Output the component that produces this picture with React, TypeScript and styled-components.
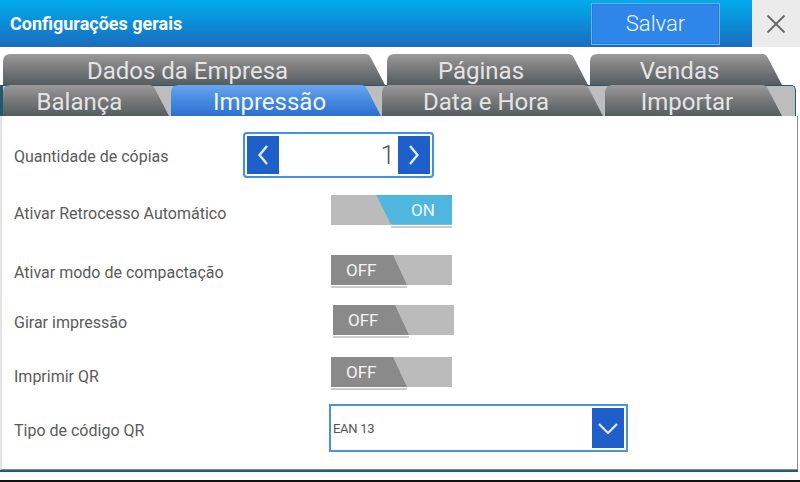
import React from 'react';
import styled, { createGlobalStyle } from 'styled-components';

const Global = createGlobalStyle`
  html, body { margin: 0; padding: 0; background: #fff; }
  body { font-family: Roboto, "Noto Sans", sans-serif; }
  * { box-sizing: border-box; }
`;

const Screen = styled.div`
  width: 800px;
  height: 482px;
  display: flex;
  flex-direction: column;
  background: #fff;
  overflow: hidden;
`;

const Header = styled.header`
  display: flex;
  height: 47px;
  flex-shrink: 0;
`;

const HeaderBar = styled.div`
  flex: 1;
  display: flex;
  align-items: center;
  padding-left: 10px;
  padding-right: 32px;
  background: linear-gradient(to bottom, #02acec 0%, #0a90da 45%, #1b6bbd 100%);
`;

const Title = styled.h1`
  margin: 0;
  font: 700 18px Roboto, sans-serif;
  color: #fff;
`;

const SaveButton = styled.button`
  margin-left: auto;
  width: 129px;
  height: 42px;
  background: #2f86ea;
  border: 1px solid #6cb4f6;
  box-shadow: inset 0 0 0 1px #2a7ad8;
  color: #f0f5fb;
  font: 300 22px Roboto, sans-serif;
  padding: 0;
`;

const CloseArea = styled.div`
  width: 48px;
  background: #ebebeb;
  display: flex;
  align-items: center;
  justify-content: center;
`;

const TabsArea = styled.nav`
  padding-top: 7px;
  display: flex;
  flex-direction: column;
  flex-shrink: 0;
`;

const TabRowTop = styled.div`
  display: flex;
  gap: 2px;
  padding-left: 3px;
  height: 31px;
`;

const TabRowBottom = styled.div`
  display: flex;
  height: 31px;
  width: 796px;
  background: #bdbdbd;
  border-left: 3px solid #1f5a74;
  border-right: 1px solid #1f5a74;
  border-top: 1px solid #1f5a74;
  border-top-right-radius: 5px;
`;

const Tab = styled.div<{ $w: number; $active?: boolean; $gap?: number }>`
  width: ${p => p.$w}px;
  margin-left: ${p => p.$gap ?? 0}px;
  margin-top: -1px;
  height: 31px;
  flex-shrink: 0;
  padding-right: 13px;
  padding-top: 2px;
  text-align: center;
  font: 400 24px/31px Roboto, sans-serif;
  color: ${p => (p.$active ? '#f2f6fc' : '#e4e4e4')};
  white-space: nowrap;
  overflow: hidden;
  background: ${p =>
    p.$active
      ? 'linear-gradient(to bottom, #66a7ef 0%, #4589e0 50%, #2c70d0 100%)'
      : 'linear-gradient(to bottom, #9a9a9a 0%, #7a7b7c 45%, #565c5f 100%)'};
  clip-path: polygon(
    0 7px, 1px 3px, 3px 1px, 7px 0,
    calc(100% - 19px) 0, calc(100% - 16px) 1px, calc(100% - 14px) 4px,
    100% 100%, 0 100%
  );
`;

const TopTab = styled(Tab)`
  margin-top: 0;
`;

const Panel = styled.main`
  width: 798px;
  height: 354px;
  flex-shrink: 0;
  border-left: 2px solid #e4e4e4;
  border-right: 1px solid #8a8a8a;
  border-bottom: 1px solid #8a8a8a;
  box-shadow: 0 2px 0 0 #1d5f79;
  padding: 15px 0 0 12px;
  display: flex;
  flex-direction: column;
`;

const Row = styled.div<{ $h: number }>`
  display: grid;
  grid-template-columns: 229px 1fr;
  align-items: center;
  height: ${p => p.$h}px;
`;

const Label = styled.span<{ $dy?: number }>`
  font: 400 16px Roboto, sans-serif;
  color: #5a5a5a;
  white-space: nowrap;
  transform: translateY(${p => p.$dy ?? 1}px);
`;

const Control = styled.div<{ $indent?: number }>`
  margin-left: ${p => p.$indent ?? 0}px;
  display: flex;
`;

const Stepper = styled.div`
  display: flex;
  width: 191px;
  height: 46px;
  border: 2px solid #3f90e8;
  border-radius: 4px;
  padding: 2px;
`;

const StepButton = styled.button`
  width: 32px;
  background: #1f5fc9;
  border: 0;
  padding: 0;
  display: flex;
  align-items: center;
  justify-content: center;
`;

const StepValue = styled.span`
  flex: 1;
  text-align: right;
  padding-right: 3px;
  font: 300 26px/38px Roboto, sans-serif;
  color: #555;
`;

const Toggle = styled.div`
  display: flex;
  flex-direction: column;
  width: 121px;
`;

const Track = styled.div<{ $on: boolean }>`
  display: flex;
  justify-content: ${p => (p.$on ? 'flex-end' : 'flex-start')};
  height: 30px;
  background: #bbbbbb;
`;

const Thumb = styled.div<{ $on: boolean }>`
  width: 76px;
  height: 30px;
  display: flex;
  align-items: center;
  font: 400 17px Roboto, sans-serif;
  background: ${p => (p.$on ? '#4fb7df' : '#8a8a8a')};
  color: ${p => (p.$on ? '#eef8fc' : '#f4f4f4')};
  justify-content: ${p => (p.$on ? 'center' : 'flex-start')};
  padding-left: ${p => (p.$on ? '18px' : '15px')};
  clip-path: ${p =>
    p.$on
      ? 'polygon(0 0, 100% 0, 100% 100%, 15px 100%)'
      : 'polygon(0 0, 62px 0, 100% 100%, 0 100%)'};
`;

const Underline = styled.div<{ $on: boolean }>`
  width: ${p => (p.$on ? 61 : 76)}px;
  height: 2px;
  margin-top: 1px;
  background: #cbcbcb;
  align-self: ${p => (p.$on ? 'flex-end' : 'flex-start')};
`;

const Select = styled.div`
  display: flex;
  width: 299px;
  height: 48px;
  border: 2px solid #4a92e6;
  padding: 2px;
  align-items: stretch;
`;

const SelectText = styled.span`
  flex: 1;
  display: flex;
  align-items: center;
  font: 400 13px Roboto, sans-serif;
  color: #555;
  letter-spacing: -0.3px;
`;

const SelectButton = styled.button`
  width: 32px;
  background: #1f5fc9;
  border: 0;
  padding: 0;
  display: flex;
  align-items: center;
  justify-content: center;
`;

const Spacer = styled.div`
  flex: 1;
`;

const BottomLine = styled.div`
  height: 2px;
  background: #111;
  flex-shrink: 0;
`;

const Chevron = ({ dir }: { dir: 'left' | 'right' | 'down' }) => {
  if (dir === 'down') {
    return (
      <svg width="20" height="11" viewBox="0 0 20 11">
        <polyline points="1,1 10,10 19,1" fill="none" stroke="#e4ecfa" strokeWidth="2.2" />
      </svg>
    );
  }
  const pts = dir === 'left' ? '9,1 1.5,10 9,19' : '1,1 8.5,10 1,19';
  return (
    <svg width="10" height="20" viewBox="0 0 10 20">
      <polyline points={pts} fill="none" stroke="#e4ecfa" strokeWidth="2.4" />
    </svg>
  );
};

const Switch = ({ on }: { on: boolean }) => (
  <Toggle>
    <Track $on={on}>
      <Thumb $on={on}>{on ? 'ON' : 'OFF'}</Thumb>
    </Track>
    <Underline $on={on} />
  </Toggle>
);

export default function App() {
  return (
    <Screen>
      <Global />
      <Header>
        <HeaderBar>
          <Title>Configurações gerais</Title>
          <SaveButton>Salvar</SaveButton>
        </HeaderBar>
        <CloseArea>
          <svg width="20" height="20" viewBox="0 0 20 20">
            <path d="M1.5 1.5 L18.5 18.5 M18.5 1.5 L1.5 18.5" stroke="#666" strokeWidth="1.8" />
          </svg>
        </CloseArea>
      </Header>

      <TabsArea>
        <TabRowTop>
          <TopTab $w={382}>Dados da Empresa</TopTab>
          <TopTab $w={201}>Páginas</TopTab>
          <TopTab $w={192}>Vendas</TopTab>
        </TabRowTop>
        <TabRowBottom>
          <Tab $w={166}>Balança</Tab>
          <Tab $w={210} $gap={2} $active>Impressão</Tab>
          <Tab $w={221} $gap={1}>Data e Hora</Tab>
          <Tab $w={177} $gap={2}>Importar</Tab>
        </TabRowBottom>
      </TabsArea>

      <Panel>
        <Row $h={48}>
          <Label>Quantidade de cópias</Label>
          <Control>
            <Stepper>
              <StepButton aria-label="menos"><Chevron dir="left" /></StepButton>
              <StepValue>1</StepValue>
              <StepButton aria-label="mais"><Chevron dir="right" /></StepButton>
            </Stepper>
          </Control>
        </Row>
        <Row $h={64}>
          <Label $dy={2}>Ativar Retrocesso Automático</Label>
          <Control $indent={88}><Switch on /></Control>
        </Row>
        <Row $h={57}>
          <Label>Ativar modo de compactação</Label>
          <Control $indent={88}><Switch on={false} /></Control>
        </Row>
        <Row $h={43}>
          <Label>Girar impressão</Label>
          <Control $indent={90}><Switch on={false} /></Control>
        </Row>
        <Row $h={61}>
          <Label $dy={3}>Imprimir QR</Label>
          <Control $indent={88}><Switch on={false} /></Control>
        </Row>
        <Row $h={48}>
          <Label $dy={2}>Tipo de código QR</Label>
          <Control $indent={86}>
            <Select>
              <SelectText>EAN 13</SelectText>
              <SelectButton aria-label="abrir"><Chevron dir="down" /></SelectButton>
            </Select>
          </Control>
        </Row>
      </Panel>
      <Spacer />
      <BottomLine />
    </Screen>
  );
}
